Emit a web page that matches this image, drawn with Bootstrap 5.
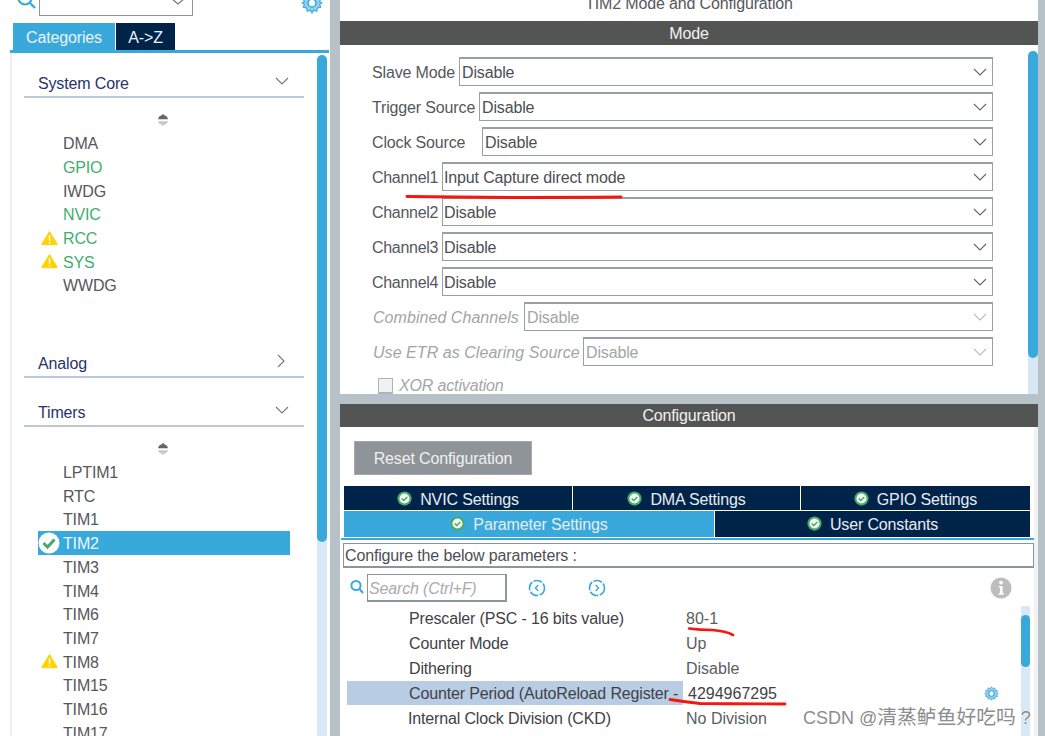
<!DOCTYPE html>
<html lang="en">
<head>
<meta charset="utf-8">
<title>TIM2 Mode and Configuration</title>
<link href="https://cdn.jsdelivr.net/npm/bootstrap@5.3.0/dist/css/bootstrap.min.css" rel="stylesheet">
<style>
html,body{height:736px;overflow:hidden;background:#b7c2c8}
body{font-family:"Liberation Sans",Arial,sans-serif;font-size:16px;color:#4c4f52;position:relative;line-height:1.2;letter-spacing:-.15px}
.shell{width:1045px;height:736px}
.left-pane{width:330px;height:736px;background:#fff}
.top-strip{height:16px;overflow:hidden}
.find-ico{width:20px;height:20px;margin:-10px 0 0 17px;flex:none}
.find-box{width:154px;height:16px;margin-left:2px;border:1px solid #8f9499;border-top:0;display:flex;justify-content:flex-end}
.find-box svg{margin:-2px 7px 0 0}
.gear-top{width:22px;height:22px;margin:-8px 0 0 108px;flex:none}
.cat-tabs{margin:7px 0 0 13px;gap:1px;height:27px}
.cat-tab{height:27px;display:flex;align-items:center;justify-content:center;color:#e9f3fa;padding-top:2px}
.cat-on{width:102px;background:#39a9dc}
.cat-off{width:59px;background:#002349}
.blue-rule{height:3px;margin:0 1px 0 10px;background:#39a9dc}
.left-body{height:683px;margin-left:10px;border-left:2px solid #f0f0f0;overflow:hidden}
.left-col{width:305px;flex:none;overflow:hidden}
.cat-head{margin-left:12px;width:280px;height:29px;border-bottom:2px solid #bcc8dc;padding:2px 15px 0 14px;color:#27346a;display:flex;align-items:center;justify-content:space-between}
.cat-head svg{margin-bottom:5px}
.cat-thin{border-bottom-color:#bfc8d2}
.first-head{margin-top:16px}
.gap-analog{margin-top:52px}
.gap-timers{margin-top:20px}
.sort-handle{height:33px;margin-left:145px;padding-top:15px}
.periph{margin-left:26px;width:252px;height:23.7px;display:flex;align-items:center;padding:2px 0 0 25px;position:relative;color:#55585c}
.periph svg{position:absolute;left:3px;top:4px}
.periph.ok-item{color:#3fae6d}
.periph.sel{background:#39a9dc;color:#eef7fc}
.periph.sel svg{left:0;top:1px}
.vbar{width:10px;flex:none;background:#d9e8f6;border-radius:5px 5px 0 0}
.vthumb{background:#39a9dc;border-radius:5px}
.vbar-left{margin-top:2px;height:681px}
.vbar-left .vthumb{height:487px}
.mid-gap{width:10px;flex:none}
.right-pane{width:698px;height:736px;flex:none}
.title-row{height:21px;background:#fff;overflow:hidden;text-align:center;color:#55585c}
.title-row div{margin-top:-6px}
.dark-bar{background:#535554;color:#f1f1f1;text-align:center;display:flex;align-items:center;justify-content:center}
.mode-bar{height:24px;padding-top:2px}
.conf-bar{height:23px}
.mode-pane{height:349px;background:#fff;overflow:hidden}
.mode-form{width:688px;padding:12px 0 0 32px;overflow:hidden}
.mode-row{width:621px;height:29px;margin-bottom:6px;display:flex;align-items:stretch}
.mode-row label{flex:none;display:flex;align-items:center;color:#55585c;white-space:nowrap;padding-top:3px}
.w-slave{width:87px}.w-trig{width:107px}.w-clock{width:110px}.w-ch{width:70px;letter-spacing:-.3px}.w-comb{width:152px}.w-etr{width:211px}
.pick{flex:1 1 auto;min-width:0;height:29px;border:1px solid #9a9fa3;border-top-width:2px;border-radius:0;padding:2px 24px 0 2px;font-size:16px;line-height:1;color:#4c4f52;font-family:inherit;letter-spacing:-.15px;
background-color:#fff;background-image:url("data:image/svg+xml,%3Csvg xmlns='http://www.w3.org/2000/svg' width='14' height='8'%3E%3Cpath d='M1 1l6 6 6-6' fill='none' stroke='%23666' stroke-width='1.1'/%3E%3C/svg%3E");background-position:right 5px center;background-size:14px 8px;background-repeat:no-repeat}
.pick:disabled{background-color:#fff;color:#a3a5a7;background-image:url("data:image/svg+xml,%3Csvg xmlns='http://www.w3.org/2000/svg' width='14' height='8'%3E%3Cpath d='M1 1l6 6 6-6' fill='none' stroke='%23bbb' stroke-width='1.1'/%3E%3C/svg%3E")}
.pick-tight{padding-left:1px}
.mode-row.off label{color:#a3a5a7;font-style:italic;letter-spacing:.05px;padding-left:1px}
.xor-row{margin:12px 0 0 6px;color:#a3a5a7;font-style:italic;height:20px;gap:6px}
.xor-row span+span{margin-top:-2px}
.xor-box{width:15px;height:16px;background:#f0f1f2;border:1px solid #b0b3b6;border-bottom-width:2px;flex:none}
.vbar-mode{margin-top:6px;height:343px}
.vbar-mode .vthumb{height:307px}
.band{height:10px;background:#b7c2c8}
.conf-pane{height:309px;background:#fff;overflow:hidden}
.reset-btn{width:178px;height:34px;margin:14px 0 0 14px;background:#8f9499;border:1px solid #a4a8ab;color:#eef0f1;border-radius:0;font-size:16px;padding:2px 0 0;letter-spacing:-.15px}
.reset-btn:disabled{background:#8f9499;border-color:#a4a8ab;color:#eef0f1;opacity:1}
.set-tabs{margin:11px 0 0 4px;width:686px}
.set-row{gap:1px;display:flex}
.set-row+.set-row{margin-top:1px}
.set-tab{display:flex;align-items:center;justify-content:center;gap:8px;background:#002349;color:#e8edf2}
.set-row.r1 .set-tab{height:24px;padding-top:3px}
.set-row.r2 .set-tab{height:26px;padding-top:2px}
.set-tab svg{margin-top:-3px}
.t-a{width:228px}.t-b{width:227px}.t-c{width:229px}
.t-p{width:370px;background:#39a9dc!important}.t-u{width:315px}
.tab-rule{height:2px;margin:1px 0 0 1px;background:#39a9dc}
.hint-box{margin:3px 0 0 3px;height:25px;border:1px solid #8f9499;border-bottom-width:2px;padding:2px 0 0 1px;display:flex;align-items:center;color:#4c4f52}
.search-row{height:38px;padding:6px 0 0 10px}
.search-field{width:140px;height:28px;border:1px solid #8f9499;border-width:1px 2px 2px 1px;margin-left:3px;padding:3px 0 0 1px;font-style:italic;color:#a9abad;display:flex;align-items:center}
.nav-circ{margin-top:5px}
.circ-a{margin-left:21px}.circ-b{margin-left:42px}
.info-ico{margin:3px 0 0 384px}
.param-wrap{height:130px}
.param-list{width:674px;margin-left:7px;flex:none}
.param{height:25px;display:flex;align-items:center;color:#3f4245}
.param-name{width:339px;padding-left:62px;flex:none;white-space:nowrap;overflow:hidden}
.param-name.nudge{padding-left:61px}
.param-val{color:#5b5e61;letter-spacing:0}
.param.hl .param-name{background:#b8cde4;height:24px;width:336px;display:flex;align-items:center;margin-right:3px;align-self:flex-start;padding-top:1px}
.param.hl .param-val{color:#3f4245;margin-left:2px}
.gear-row{margin-left:auto;margin-right:22px;display:flex}
.vbar-param{width:9px;height:130px;border-radius:0;padding-top:9px}
.vbar-param .vthumb{height:52px}
.edge{width:7px;flex:none;background:#b7c2c8}
.inner-edge{width:4px;background:#f0f2f4;height:100%}
.ink{position:absolute;left:0;top:0;pointer-events:none}
.stamp{position:absolute;left:803px;top:704px;font:18px/24px "Liberation Sans",sans-serif;color:#8b8d90;letter-spacing:0;text-shadow:0 0 2px #fff;white-space:nowrap}
.stamp-cjk{font:19.8px/24px "Noto Sans CJK SC",sans-serif}
</style>
</head>
<body>
<svg width="0" height="0" class="position-absolute">
<defs>
<symbol id="warn" viewBox="0 0 18 16"><path d="M9 1.2 1 14.2q-.4.9.6.9h14.8q1 0 .6-.9z" fill="#ffd200" stroke="#ffd200" stroke-linejoin="round"/><rect x="8.3" y="5" width="1.5" height="6.2" fill="#fff"/><rect x="8.3" y="12.2" width="1.5" height="1.5" fill="#fff"/></symbol>
<symbol id="okbig" viewBox="0 0 22 22"><circle cx="11" cy="11" r="10.5" fill="#fff"/><path d="M5.5 11l4 4 7-7.5" fill="none" stroke="#48a868" stroke-width="3"/></symbol>
<symbol id="oksm" viewBox="0 0 16 16"><circle cx="8" cy="8" r="7.6" fill="#46a96a"/><circle cx="8" cy="8" r="5.4" fill="#f3f8f4"/><path d="M5 8l2.2 2.2L11 6.4" fill="none" stroke="#46a96a" stroke-width="1.6"/></symbol>
<symbol id="gear" viewBox="0 0 20 20"><path d="M10 1l1.6 2.4 2.8-.9.6 2.9 2.9.6-.9 2.8L19 10l-2 1.2.9 2.8-2.9.6-.6 2.9-2.8-.9L10 19l-1.6-2.4-2.8.9-.6-2.9-2.9-.6.9-2.8L1 10l2-1.2-.9-2.8 2.9-.6.6-2.9 2.8.9z" fill="#8fd0ee" stroke="#39a9dc"/><circle cx="10" cy="10" r="3.6" fill="#fff" stroke="#39a9dc" stroke-width="1.4"/></symbol>
<symbol id="handle" viewBox="0 0 12 14"><path d="M1 6.2 Q2 2.5 4.5 2.5L6 .8 7.5 2.5Q10 2.5 11 6.2z" fill="#666"/><path d="M1 8.2h10Q10 11.5 7.5 11.5L6 13.2 4.5 11.5Q2 11.5 1 8.2z" fill="#c8c8c8"/></symbol>
</defs>
</svg>

<div class="shell d-flex">
  <div class="left-pane d-flex flex-column flex-none">
    <div class="top-strip d-flex">
      <svg class="find-ico" viewBox="0 0 20 20"><circle cx="8" cy="8" r="6.5" fill="none" stroke="#39a9dc" stroke-width="2.2"/><path d="M13 13l5 5" stroke="#39a9dc" stroke-width="2.4"/></svg>
      <div class="find-box"><svg width="14" height="8"><path d="M1 1l6 5 6-5" fill="none" stroke="#777" stroke-width="1.2"/></svg></div>
      <svg class="gear-top"><use href="#gear"/></svg>
    </div>
    <div class="cat-tabs d-flex">
      <div class="cat-tab cat-on">Categories</div>
      <div class="cat-tab cat-off">A-&gt;Z</div>
    </div>
    <div class="blue-rule"></div>
    <div class="left-body d-flex">
      <div class="left-col">
        <div class="cat-head first-head">System Core<svg width="14" height="8"><path d="M1 1l6 6 6-6" fill="none" stroke="#777" stroke-width="1.1"/></svg></div>
        <div class="sort-handle"><svg width="12" height="14" class="d-block"><use href="#handle"/></svg></div>
        <div class="periph">DMA</div>
        <div class="periph ok-item">GPIO</div>
        <div class="periph">IWDG</div>
        <div class="periph ok-item">NVIC</div>
        <div class="periph ok-item"><svg width="17" height="16"><use href="#warn"/></svg>RCC</div>
        <div class="periph ok-item"><svg width="17" height="16"><use href="#warn"/></svg>SYS</div>
        <div class="periph">WWDG</div>
        <div class="cat-head gap-analog">Analog<svg width="8" height="14" class="me-1"><path d="M1 1l6 6-6 6" fill="none" stroke="#777" stroke-width="1.1"/></svg></div>
        <div class="cat-head cat-thin gap-timers">Timers<svg width="14" height="8"><path d="M1 1l6 6 6-6" fill="none" stroke="#777" stroke-width="1.1"/></svg></div>
        <div class="sort-handle"><svg width="12" height="14" class="d-block"><use href="#handle"/></svg></div>
        <div class="periph">LPTIM1</div>
        <div class="periph">RTC</div>
        <div class="periph">TIM1</div>
        <div class="periph sel"><svg width="22" height="22"><use href="#okbig"/></svg>TIM2</div>
        <div class="periph">TIM3</div>
        <div class="periph">TIM4</div>
        <div class="periph">TIM6</div>
        <div class="periph">TIM7</div>
        <div class="periph"><svg width="17" height="16"><use href="#warn"/></svg>TIM8</div>
        <div class="periph">TIM15</div>
        <div class="periph">TIM16</div>
        <div class="periph">TIM17</div>
      </div>
      <div class="vbar vbar-left"><div class="vthumb"></div></div>
    </div>
  </div>

  <div class="mid-gap"></div>

  <div class="right-pane d-flex flex-column">
    <div class="title-row"><div>TIM2 Mode and Configuration</div></div>
    <div class="dark-bar mode-bar">Mode</div>
    <div class="mode-pane d-flex">
      <div class="mode-form">
        <div class="mode-row"><label class="w-slave">Slave Mode</label><select class="form-select pick"><option>Disable</option></select></div>
        <div class="mode-row"><label class="w-trig">Trigger Source</label><select class="form-select pick"><option>Disable</option></select></div>
        <div class="mode-row"><label class="w-clock">Clock Source</label><select class="form-select pick"><option>Disable</option></select></div>
        <div class="mode-row"><label class="w-ch">Channel1</label><select class="form-select pick pick-tight"><option>Input Capture direct mode</option></select></div>
        <div class="mode-row"><label class="w-ch">Channel2</label><select class="form-select pick pick-tight"><option>Disable</option></select></div>
        <div class="mode-row"><label class="w-ch">Channel3</label><select class="form-select pick pick-tight"><option>Disable</option></select></div>
        <div class="mode-row"><label class="w-ch">Channel4</label><select class="form-select pick pick-tight"><option>Disable</option></select></div>
        <div class="mode-row off"><label class="w-comb">Combined Channels</label><select class="form-select pick" disabled><option>Disable</option></select></div>
        <div class="mode-row off"><label class="w-etr">Use ETR as Clearing Source</label><select class="form-select pick" disabled><option>Disable</option></select></div>
        <div class="xor-row d-flex align-items-start"><span class="xor-box"></span><span>XOR activation</span></div>
      </div>
      <div class="vbar vbar-mode"><div class="vthumb"></div></div>
    </div>
    <div class="band"></div>
    <div class="dark-bar conf-bar">Configuration</div>
    <div class="conf-pane d-flex">
      <div class="flex-grow-1">
        <button type="button" class="btn reset-btn d-block" disabled>Reset Configuration</button>
        <div class="set-tabs">
          <div class="set-row r1">
            <div class="set-tab t-a"><svg width="15" height="15"><use href="#oksm"/></svg>NVIC Settings</div>
            <div class="set-tab t-b"><svg width="15" height="15"><use href="#oksm"/></svg>DMA Settings</div>
            <div class="set-tab t-c"><svg width="15" height="15"><use href="#oksm"/></svg>GPIO Settings</div>
          </div>
          <div class="set-row r2">
            <div class="set-tab t-p"><svg width="15" height="15"><use href="#oksm"/></svg>Parameter Settings</div>
            <div class="set-tab t-u"><svg width="15" height="15"><use href="#oksm"/></svg>User Constants</div>
          </div>
        </div>
        <div class="tab-rule"></div>
        <div class="hint-box">Configure the below parameters :</div>
        <div class="search-row d-flex">
          <svg width="14" height="16" class="nav-circ" viewBox="0 0 14 16"><circle cx="6" cy="6.5" r="4.6" fill="none" stroke="#39a9dc" stroke-width="2"/><path d="M9.5 10l3.5 4" stroke="#39a9dc" stroke-width="2"/></svg>
          <div class="search-field">Search (Ctrl+F)</div>
          <svg width="18" height="18" class="nav-circ circ-a" viewBox="0 0 18 18"><circle cx="9" cy="9" r="7.5" fill="none" stroke="#39a9dc" stroke-width="1.6" stroke-dasharray="9 1.5"/><path d="M10.3 6L7.4 9l2.9 3" fill="none" stroke="#39a9dc" stroke-width="1.4"/></svg>
          <svg width="18" height="18" class="nav-circ circ-b" viewBox="0 0 18 18"><circle cx="9" cy="9" r="7.5" fill="none" stroke="#39a9dc" stroke-width="1.6" stroke-dasharray="9 1.5"/><path d="M7.7 6l2.9 3-2.9 3" fill="none" stroke="#39a9dc" stroke-width="1.4"/></svg>
          <svg width="22" height="22" class="info-ico" viewBox="0 0 22 22"><circle cx="11" cy="11" r="10.5" fill="#bdbdbd"/><circle cx="11" cy="5.6" r="1.9" fill="#fff"/><path d="M8.8 9h3.8v7.2h1.4v1.6H8.6v-1.6h1.4V10.6H8.8z" fill="#fff"/></svg>
        </div>
        <div class="param-wrap d-flex">
          <div class="param-list">
            <div class="param"><span class="param-name">Prescaler (PSC - 16 bits value)</span><span class="param-val">80-1</span></div>
            <div class="param"><span class="param-name">Counter Mode</span><span class="param-val">Up</span></div>
            <div class="param"><span class="param-name">Dithering</span><span class="param-val">Disable</span></div>
            <div class="param hl"><span class="param-name">Counter Period (AutoReload Register -&nbsp;</span><span class="param-val">4294967295</span><span class="gear-row"><svg width="15" height="15"><use href="#gear"/></svg></span></div>
            <div class="param"><span class="param-name nudge">Internal Clock Division (CKD)</span><span class="param-val">No Division</span></div>
          </div>
          <div class="vbar vbar-param"><div class="vthumb"></div></div>
        </div>
      </div>
      <div class="inner-edge flex-none"></div>
    </div>
  </div>
  <div class="edge"></div>
</div>

<svg class="ink" width="1045" height="736" fill="none" stroke="#f5160f" stroke-linecap="round" stroke-linejoin="round">
  <path d="M407 196.5Q500 198 621 197" stroke-width="3"/>
  <path d="M689 628.5Q700 630 712 630Q726 631 733 635" stroke-width="2.6"/>
  <path d="M670 699.5Q685 702 700 703.5Q740 704 785 704" stroke-width="2.8"/>
</svg>
<div class="stamp">CSDN @<span class="stamp-cjk">清蒸鲈鱼好吃吗</span> ?</div>
</body>
</html>
